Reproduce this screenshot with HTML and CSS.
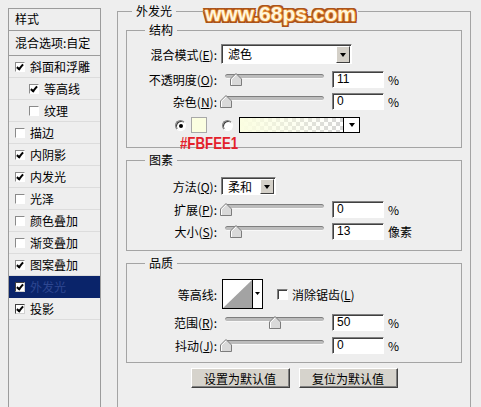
FILE: index.html
```html
<!DOCTYPE html>
<html>
  <head>
    <title>图层样式 - 外发光</title>
    <link rel="stylesheet" href="styles.css">
  </head>
  <body>
    <div class="dialog">
      <div class="sidebar">
        <div class="side-head">样式</div>
        <div class="side-head blend">混合选项:自定</div>
        <div class="side-item"><span class="check on"></span>斜面和浮雕</div>
        <div class="side-item sub"><span class="check on"></span>等高线</div>
        <div class="side-item sub"><span class="check"></span>纹理</div>
        <div class="side-item"><span class="check"></span>描边</div>
        <div class="side-item"><span class="check on"></span>内阴影</div>
        <div class="side-item"><span class="check on"></span>内发光</div>
        <div class="side-item"><span class="check"></span>光泽</div>
        <div class="side-item"><span class="check"></span>颜色叠加</div>
        <div class="side-item"><span class="check"></span>渐变叠加</div>
        <div class="side-item"><span class="check on"></span>图案叠加</div>
        <div class="side-item selected"><span class="check on dark"></span>外发光</div>
        <div class="side-item"><span class="check on dark"></span>投影</div>
      </div>

      <div class="main">
        <div class="watermark">www.68ps.com</div>
        <div class="note">#FBFEE1</div>

        <fieldset class="group outer">
          <legend>外发光</legend>

          <fieldset class="group structure">
            <legend>结构</legend>
            <div class="row">
              <span class="label">混合模式(<u>E</u>):</span>
              <div class="select wide"><span class="select-text">滤色</span><span class="drop"><span class="arrow"></span></span></div>
            </div>
            <div class="row gap3">
              <span class="label">不透明度(<u>O</u>):</span>
              <div class="slider">
                <div class="track"></div>
                <svg class="thumb" style="left:5px" width="12" height="13" viewBox="0 0 12 13"><polygon points="6,0.5 11.5,6 11.5,12.5 0.5,12.5 0.5,6" fill="#d9d9d9" stroke="#7c7c7c"/><polyline points="1.5,12 1.5,6.4 6,1.9" fill="none" stroke="#fff"/></svg>
              </div>
              <div class="num">11</div>
              <span class="unit">%</span>
            </div>
            <div class="row">
              <span class="label">杂色(<u>N</u>):</span>
              <div class="slider">
                <div class="track"></div>
                <svg class="thumb" style="left:-5px" width="12" height="13" viewBox="0 0 12 13"><polygon points="6,0.5 11.5,6 11.5,12.5 0.5,12.5 0.5,6" fill="#d9d9d9" stroke="#7c7c7c"/><polyline points="1.5,12 1.5,6.4 6,1.9" fill="none" stroke="#fff"/></svg>
              </div>
              <div class="num">0</div>
              <span class="unit">%</span>
            </div>
            <div class="row color-row gap2">
              <span class="radio on"></span>
              <span class="swatch"></span>
              <span class="radio second"></span>
              <div class="gradient"><span class="gradient-fill"></span><span class="gradient-drop"><span class="arrow"></span></span></div>
            </div>
          </fieldset>

          <fieldset class="group elements">
            <legend>图素</legend>
            <div class="row">
              <span class="label">方法(<u>Q</u>):</span>
              <div class="select short"><span class="select-text">柔和</span><span class="drop"><span class="arrow"></span></span></div>
            </div>
            <div class="row gap1">
              <span class="label">扩展(<u>P</u>):</span>
              <div class="slider">
                <div class="track"></div>
                <svg class="thumb" style="left:-5px" width="12" height="13" viewBox="0 0 12 13"><polygon points="6,0.5 11.5,6 11.5,12.5 0.5,12.5 0.5,6" fill="#d9d9d9" stroke="#7c7c7c"/><polyline points="1.5,12 1.5,6.4 6,1.9" fill="none" stroke="#fff"/></svg>
              </div>
              <div class="num">0</div>
              <span class="unit">%</span>
            </div>
            <div class="row">
              <span class="label">大小(<u>S</u>):</span>
              <div class="slider">
                <div class="track"></div>
                <svg class="thumb" style="left:5px" width="12" height="13" viewBox="0 0 12 13"><polygon points="6,0.5 11.5,6 11.5,12.5 0.5,12.5 0.5,6" fill="#d9d9d9" stroke="#7c7c7c"/><polyline points="1.5,12 1.5,6.4 6,1.9" fill="none" stroke="#fff"/></svg>
              </div>
              <div class="num">13</div>
              <span class="unit">像素</span>
            </div>
          </fieldset>

          <fieldset class="group quality">
            <legend>品质</legend>
            <div class="row contour-row">
              <span class="label">等高线:</span>
              <svg class="contour" width="41" height="30" viewBox="0 0 41 30">
                <rect x="0.5" y="0.5" width="40" height="29" fill="#fff" stroke="#000"/>
                <polygon points="1,29 30,1 30,29" fill="#a3a3a3"/>
                <line x1="30.5" y1="1" x2="30.5" y2="29" stroke="#000"/>
                <polygon points="33,13 38,13 35.5,16" fill="#000"/>
              </svg>
              <span class="box"></span>
              <span class="box-text">消除锯齿(<u>L</u>)</span>
            </div>
            <div class="row gap2">
              <span class="label">范围(<u>R</u>):</span>
              <div class="slider">
                <div class="track"></div>
                <svg class="thumb" style="left:44px" width="12" height="13" viewBox="0 0 12 13"><polygon points="6,0.5 11.5,6 11.5,12.5 0.5,12.5 0.5,6" fill="#d9d9d9" stroke="#7c7c7c"/><polyline points="1.5,12 1.5,6.4 6,1.9" fill="none" stroke="#fff"/></svg>
              </div>
              <div class="num">50</div>
              <span class="unit">%</span>
            </div>
            <div class="row gap1">
              <span class="label">抖动(<u>J</u>):</span>
              <div class="slider">
                <div class="track"></div>
                <svg class="thumb" style="left:-5px" width="12" height="13" viewBox="0 0 12 13"><polygon points="6,0.5 11.5,6 11.5,12.5 0.5,12.5 0.5,6" fill="#d9d9d9" stroke="#7c7c7c"/><polyline points="1.5,12 1.5,6.4 6,1.9" fill="none" stroke="#fff"/></svg>
              </div>
              <div class="num">0</div>
              <span class="unit">%</span>
            </div>
          </fieldset>

          <div class="buttons">
            <button class="btn">设置为默认值</button>
            <button class="btn">复位为默认值</button>
          </div>
        </fieldset>
      </div>
    </div>
  </body>
</html>
```

FILE: styles.css
```css
html, body {
    margin: 0;
    height: 100%;
    overflow: hidden;
}
body {
    background-color: #eeeeee;
    font-family: "Noto Sans CJK SC", "Liberation Sans", sans-serif;
    font-size: 12px;
    color: #000;
}
u {
    text-decoration: underline;
}
.dialog {
    display: flex;
    align-items: flex-start;
    padding: 8px 0 0 8px;
}

/* left list */
.sidebar {
    width: 93px;
    height: 399px;
    flex-shrink: 0;
    box-sizing: border-box;
    border: 1px solid #9c9c9c;
    border-bottom: none;
}
.side-head {
    height: 21px;
    line-height: 19px;
    padding-left: 6px;
    border-bottom: 1px solid #9c9c9c;
}
.side-head.blend {
    height: 24px;
    line-height: 23px;
}
.side-item {
    display: flex;
    align-items: center;
    height: 21px;
    padding-left: 6px;
    border-bottom: 1px solid #dcdcdc;
}
.side-item.sub {
    padding-left: 20px;
}
.side-item.selected {
    background-color: #0a246a;
    color: #2e4791;
    border-bottom-color: #0a246a;
}
.check {
    position: relative;
    width: 10px;
    height: 10px;
    margin-right: 5px;
    box-sizing: border-box;
    background-color: #fff;
    border: 1px solid;
    border-color: #8a8a8a #fff #fff #8a8a8a;
    flex-shrink: 0;
}
.check.dark {
    border-color: #404040 #d0d0d0 #d0d0d0 #404040;
}
.check.on::after {
    content: "";
    position: absolute;
    left: 2px;
    top: 0;
    width: 2px;
    height: 5px;
    border: solid #000;
    border-width: 0 2px 2px 0;
    transform: rotate(40deg);
}

/* right panel */
.main {
    position: relative;
    width: 354px;
    margin-left: 16px;
    margin-top: -4px;
}
.group {
    margin: 0;
    padding: 0;
    min-width: 0;
    border: 1px solid #a4a4a4;
}
.group legend {
    margin-left: 18px;
    padding: 0 4px;
    line-height: 14px;
}
.outer {
    padding: 5px 8px 30px 8px;
    border-bottom: none;
}
.outer > legend {
    margin-left: 6px;
}
.structure {
    padding: 6px 0 11px 0;
}
.elements {
    margin-top: 5px;
    padding: 8px 0 8px 0;
}
.quality {
    margin-top: 5px;
    padding: 9px 0 6px 0;
}
.row {
    display: flex;
    align-items: center;
    height: 22px;
}
.gap1 {
    margin-top: 1px;
}
.gap2 {
    margin-top: 2px;
}
.gap3 {
    margin-top: 3px;
}
.label {
    width: 90px;
    flex-shrink: 0;
    text-align: right;
    white-space: nowrap;
}

/* dropdowns */
.select {
    display: flex;
    margin-left: 4px;
    box-sizing: border-box;
    background-color: #fff;
    border: 1px solid;
    border-color: #808080 #fff #fff #808080;
    box-shadow: inset 1px 1px #404040;
}
.select.wide {
    width: 131px;
    height: 20px;
}
.select.short {
    width: 55px;
    height: 18px;
}
.select-text {
    flex: 1;
    padding-left: 6px;
    line-height: 17px;
}
.drop {
    display: flex;
    align-items: center;
    justify-content: center;
    width: 14px;
    margin: 1px 1px 0 0;
    box-sizing: border-box;
    background-color: #d4d0c8;
    border: 1px solid;
    border-color: #fff #404040 #404040 #fff;
}
.arrow {
    width: 0;
    height: 0;
    border-left: 3.5px solid transparent;
    border-right: 3.5px solid transparent;
    border-top: 4px solid #000;
}

/* sliders */
.slider {
    position: relative;
    width: 99px;
    height: 14px;
    margin-left: 8px;
    margin-top: 2px;
}
.track {
    height: 5px;
    margin-top: 1px;
    box-sizing: border-box;
    border-radius: 3px;
    background-color: #bcbcbc;
    border-top: 1px solid #7e7e7e;
    border-bottom: 1px solid #f8f8f8;
}
.thumb {
    position: absolute;
    top: 0;
}
.num {
    width: 52px;
    height: 17px;
    margin-left: 8px;
    padding-left: 4px;
    box-sizing: border-box;
    background-color: #fff;
    border: 1px solid;
    border-color: #808080 #fff #fff #808080;
    box-shadow: inset 1px 1px #404040;
    font-family: "Liberation Sans", sans-serif;
    line-height: 15px;
}
.unit {
    margin-left: 4px;
}

/* colour row */
.color-row {
    padding-left: 48px;
}
.radio {
    position: relative;
    width: 11px;
    height: 11px;
    box-sizing: border-box;
    border-radius: 50%;
    background-color: #fff;
    border: 1px solid;
    border-color: #808080 #fff #fff #808080;
    box-shadow: inset 1px 1px #404040;
}
.radio.on::after {
    content: "";
    position: absolute;
    left: 3px;
    top: 3px;
    width: 4px;
    height: 4px;
    border-radius: 50%;
    background-color: #000;
}
.radio.second {
    margin-left: 15px;
}
.swatch {
    width: 16px;
    height: 16px;
    margin-left: 5px;
    box-sizing: border-box;
    background-color: #fbfee1;
    border: 1px solid #a8a8a8;
}
.gradient {
    display: flex;
    width: 121px;
    height: 16px;
    margin-left: 6px;
    box-sizing: border-box;
    border: 1px solid #000;
}
.gradient-fill {
    flex: 1;
    background-color: #fff;
    background-image:
        linear-gradient(to right, #fbfee1, rgba(251, 254, 225, 0)),
        linear-gradient(45deg, #d6d6d6 25%, transparent 25%, transparent 75%, #d6d6d6 75%),
        linear-gradient(45deg, #d6d6d6 25%, transparent 25%, transparent 75%, #d6d6d6 75%);
    background-size: 100% 100%, 8px 8px, 8px 8px;
    background-position: 0 0, 0 0, 4px 4px;
}
.gradient-drop {
    display: flex;
    align-items: center;
    justify-content: center;
    width: 15px;
    background-color: #fff;
    border-left: 1px solid #000;
}

/* quality */
.contour-row {
    height: 30px;
}
.contour {
    margin-left: 5px;
    flex-shrink: 0;
}
.box {
    width: 11px;
    height: 11px;
    margin-left: 14px;
    box-sizing: border-box;
    background-color: #fff;
    border: 1px solid;
    border-color: #808080 #fff #fff #808080;
    box-shadow: inset 1px 1px #404040;
}
.box-text {
    margin-left: 4px;
}

/* buttons */
.buttons {
    display: flex;
    justify-content: center;
    gap: 9px;
    margin-top: 5px;
}
.btn {
    width: 99px;
    height: 20px;
    padding: 0;
    background-color: #d6d3cc;
    border: 1px solid;
    border-color: #fff #404040 #404040 #fff;
    box-shadow: inset -1px -1px #808080;
    font-family: "Noto Sans CJK SC", sans-serif;
    font-size: 12px;
    color: #000;
}

/* overlays */
.watermark {
    position: absolute;
    left: 86px;
    top: -2px;
    z-index: 2;
    padding: 0 2px;
    background-color: #eeeeee;
    font-family: "Liberation Sans", sans-serif;
    font-weight: bold;
    font-size: 21px;
    line-height: 24px;
    color: #fff6dc;
    text-shadow:
        1px 0 #e08a34, -1px 0 #e08a34, 0 1px #e08a34, 0 -1px #e08a34,
        2px 0 #a9531c, -2px 0 #a9531c, 0 2px #a9531c, 0 -2px #a9531c,
        2px 2px #a9531c, -2px -2px #a9531c, 2px -2px #a9531c, -2px 2px #a9531c;
}
.note {
    position: absolute;
    left: 63px;
    top: 130px;
    z-index: 2;
    font-family: "Liberation Sans", sans-serif;
    font-weight: bold;
    font-size: 17px;
    line-height: 20px;
    color: #e4212b;
    transform: scaleX(0.78);
    transform-origin: left top;
}
```
